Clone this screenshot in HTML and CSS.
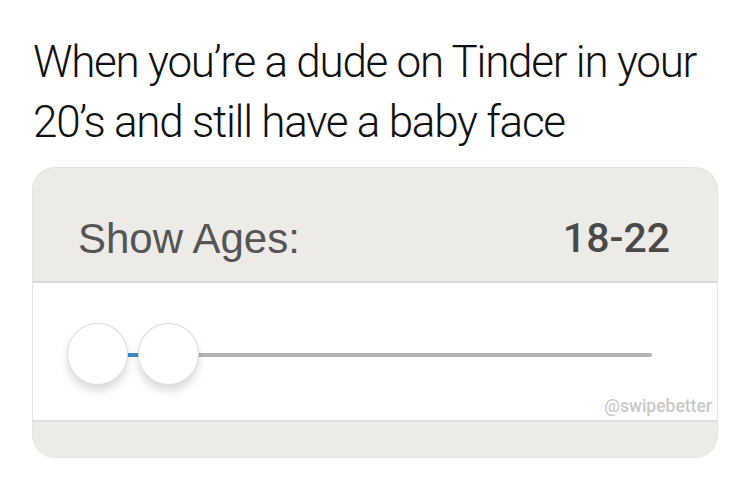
FILE: index.html
```html
<!DOCTYPE html>
<html>
<head>
<meta charset="utf-8">
<link rel="stylesheet" href="styles.css">
</head>
<body>
<div class="page">
  <p class="title">When you’re a dude on Tinder in your 20’s and still have a baby face</p>
  <div class="card">
    <div class="card-head">
      <span class="label">Show Ages:</span>
      <span class="value">18-22</span>
    </div>
    <div class="card-body">
      <div class="slider">
        <div class="track"></div>
        <div class="range"></div>
        <div class="thumb thumb-min"></div>
        <div class="thumb thumb-max"></div>
      </div>
      <div class="watermark">@swipebetter</div>
    </div>
    <div class="card-foot"></div>
  </div>
</div>
</body>
</html>
```
FILE: styles.css
```css
html, body {
  margin: 0;
  padding: 0;
  background: #ffffff;
}

.page {
  width: 750px;
  height: 498px;
  padding: 32px 0 0 33px;
  box-sizing: border-box;
  overflow: hidden;
}

.title {
  margin: 0;
  width: 700px;
  font-family: Roboto, "Liberation Sans", Arial, sans-serif;
  font-weight: 300;
  font-size: 44px;
  line-height: 60px;
  letter-spacing: -1.25px;
  color: #111111;
}

.card {
  margin-top: 16px;
  width: 684px;
  height: 289px;
  border-radius: 22px;
  overflow: hidden;
  background: #ecebe8;
  box-shadow: 0 0 0 1px #e3e3e1;
  display: flex;
  flex-direction: column;
}

.card-head {
  height: 115px;
  box-sizing: border-box;
  padding: 50px 47px 0 45px;
  border-bottom: 2px solid #d9d9d7;
  display: flex;
  justify-content: space-between;
  align-items: flex-start;
  font-family: "Liberation Sans", Arial, sans-serif;
  font-size: 42px;
  line-height: 41px;
}

.label {
  color: #555555;
}

.value {
  color: #4a4a4a;
  font-family: Roboto, "Liberation Sans", Arial, sans-serif;
  font-weight: 500;
  font-size: 41px;
}

.card-body {
  height: 139px;
  box-sizing: border-box;
  background: #ffffff;
  border-bottom: 2px solid #dddddb;
  padding: 40px 5px 0 34px;
  display: flex;
  flex-direction: column;
}

.slider {
  position: relative;
  width: 585px;
  height: 62px;
}

.track {
  position: absolute;
  left: 30px;
  right: 0;
  top: 30px;
  height: 4px;
  border-radius: 2px;
  background: #b3b3b5;
}

.range {
  position: absolute;
  left: 30px;
  width: 72px;
  top: 30px;
  height: 4px;
  background: #3a8bcc;
}

.thumb {
  position: absolute;
  top: 0;
  width: 61px;
  height: 62px;
  box-sizing: border-box;
  border-radius: 50%;
  background: #ffffff;
  border: 1px solid #dcdcdc;
  box-shadow: 0 6px 9px rgba(0, 0, 0, 0.14);
}

.thumb-min {
  left: 0;
}

.thumb-max {
  left: 71px;
}

.watermark {
  margin-top: 12px;
  align-self: flex-end;
  font-family: Roboto, "Liberation Sans", Arial, sans-serif;
  font-weight: 500;
  font-size: 17.5px;
  line-height: 18px;
  color: #c9c9c9;
}

.card-foot {
  flex: 1;
  background: #ecebe8;
}
```
